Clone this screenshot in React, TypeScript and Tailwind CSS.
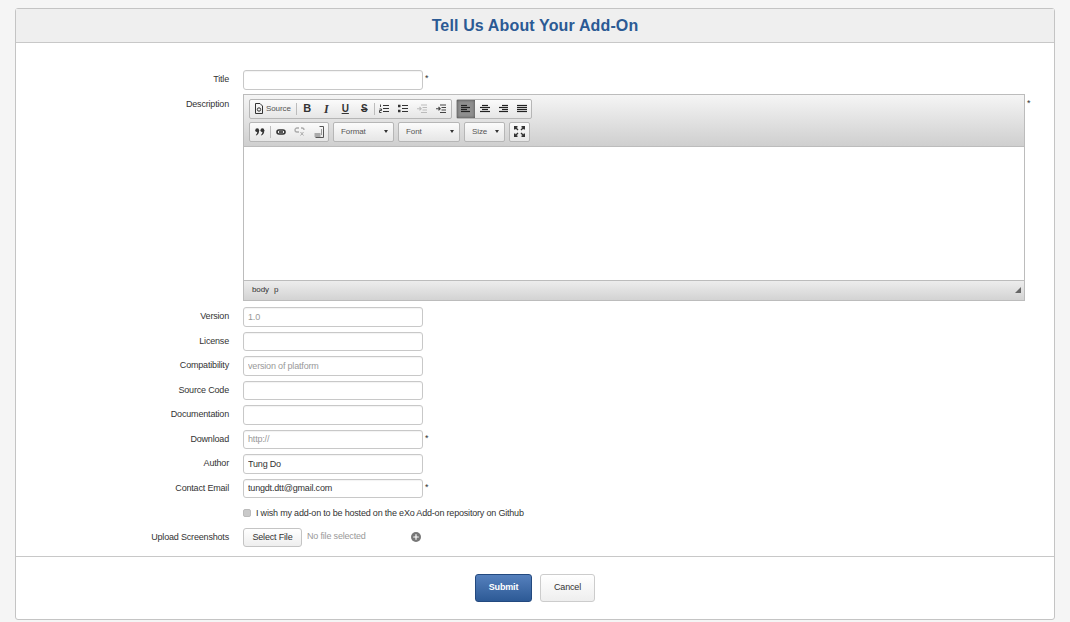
import React from 'react';
import { Plus } from 'lucide-react';

const inputClass =
  'w-[180px] h-[19.5px] rounded-[3px] border border-[#c8c8c8] bg-white px-[4px] text-[9px] tracking-[-0.18px] text-[#333] outline-none placeholder:text-[#999] shadow-[inset_0_1px_1px_rgba(0,0,0,0.05)]';

const Label = ({ children }: { children: React.ReactNode }) => (
  <label className="h-[19.5px] w-[213px] shrink-0 text-right text-[9px] leading-[19.5px] tracking-[-0.18px] text-[#333]">{children}</label>
);

const Field = ({ label, placeholder, value, required }: { label: string; placeholder?: string; value?: string; required?: boolean }) => (
  <div className="flex items-start gap-[14px]">
    <Label>{label}</Label>
    <input className={inputClass} placeholder={placeholder} defaultValue={value} />
    {required && <span className="-ml-[12px] text-[9px] leading-[16px] text-[#333]">*</span>}
  </div>
);

const Btn = ({ children, active, wide }: { children: React.ReactNode; active?: boolean; wide?: boolean }) => (
  <span className={`flex h-[18px] items-center justify-center ${wide ? 'w-[18.5px]' : 'w-[19px]'} ${active ? 'bg-[#8f8f8f] shadow-[inset_0_0_3px_rgba(0,0,0,0.5)]' : ''}`}>{children}</span>
);

const Group = ({ children }: { children: React.ReactNode }) => (
  <div className="flex h-[20px] items-center rounded-[2px] border border-[#b6b6b6] bg-gradient-to-b from-[#fbfbfb] to-[#e6e6e6]">{children}</div>
);

const Sep = ({ className }: { className: string }) => <span className={`h-[12px] w-px bg-[#bcbcbc] ${className}`} />;

const Lines = ({ rows }: { rows: [number, number][] }) => (
  <svg width="10" height="9" viewBox="0 0 10 9" fill="none" stroke="#222" strokeWidth="1.2">
    {rows.map(([a, b], i) => (
      <path key={i} d={`M${a} ${1.5 + i * 2}H${b}`} />
    ))}
  </svg>
);

const ListIcon = ({ numbered }: { numbered?: boolean }) => (
  <svg width="10" height="9" viewBox="0 0 10 9" fill="none" stroke="#333" strokeWidth="1">
    <path d="M4 1.5H10M4 4.5H10M4 7.5H10" strokeWidth="1.2" />
    {numbered ? <path d="M1.5 0.5V3M0.5 5H2.5V6.5H0.5V8.5H2.5" strokeWidth="0.9" /> : <path d="M0 2H2.5M0 7H2.5" strokeWidth="2.4" />}
  </svg>
);

const IndentIcon = ({ color }: { color: string }) => (
  <svg width="10" height="9" viewBox="0 0 10 9" fill="none" stroke={color} strokeWidth="1.1">
    <path d="M4 1H10M5.5 3.5H10M5.5 6H10M4 8.5H10" />
    <path d="M0 4.7H4M2.5 3L4.2 4.7L2.5 6.4" />
  </svg>
);

const Combo = ({ label, width }: { label: string; width: string }) => (
  <div className={`flex h-[20px] items-center justify-between rounded-[2px] border border-[#b6b6b6] bg-gradient-to-b from-[#fbfbfb] to-[#e6e6e6] pl-[7px] pr-[5px] ${width}`}>
    <span className="text-[8px] tracking-[-0.1px] text-[#555]">{label}</span>
    <span className="h-0 w-0 border-x-[2.5px] border-t-[3px] border-x-transparent border-t-[#333]" />
  </div>
);

const Editor = () => (
  <div className="-mt-[1px] mb-[1.5px] flex h-[207px] w-[782px] flex-col border border-[#bcbcbc]">
    <div className="flex h-[52px] flex-col gap-[3px] border-b border-[#bcbcbc] bg-gradient-to-b from-[#f5f5f5] to-[#cfcfcf] px-[5px] pt-[4px]">
      <div className="flex gap-[4px]">
        <Group>
          <span className="flex items-center gap-[2px] pl-[4px] pr-[3px]">
            <svg width="10" height="11" viewBox="0 0 10 11" fill="none" stroke="#333" strokeWidth="1">
              <path d="M1.5 0.5H6L8.5 3V10.5H1.5Z" />
              <circle cx="5" cy="6.5" r="1.7" />
            </svg>
            <span className="text-[8px] tracking-[-0.1px] text-[#555]">Source</span>
          </span>
          <Sep className="ml-[2px] mr-[1px]" />
          <Btn><span className="font-['Liberation_Sans'] text-[11px] font-bold leading-none text-[#333]">B</span></Btn>
          <Btn><span className="font-['Liberation_Serif'] text-[12px] font-bold italic leading-none text-[#333]">I</span></Btn>
          <Btn><span className="text-[10px] font-bold leading-none text-[#333] underline">U</span></Btn>
          <Btn><span className="text-[10px] font-bold leading-none text-[#333] line-through">S</span></Btn>
          <Sep className="" />
          <Btn><ListIcon numbered /></Btn>
          <Btn><ListIcon /></Btn>
          <Btn><IndentIcon color="#bbb" /></Btn>
          <Btn><IndentIcon color="#444" /></Btn>
        </Group>
        <Group>
          <Btn active wide><Lines rows={[[0, 6], [0, 9], [0, 6], [0, 9]]} /></Btn>
          <Btn wide><Lines rows={[[2, 8], [0, 10], [2, 8], [0, 10]]} /></Btn>
          <Btn wide><Lines rows={[[4, 10], [1, 10], [4, 10], [1, 10]]} /></Btn>
          <Btn wide><Lines rows={[[0, 10], [0, 10], [0, 10], [0, 10]]} /></Btn>
        </Group>
      </div>
      <div className="flex gap-[4px]">
        <Group>
          <Btn>
            <svg width="10" height="8" viewBox="0 0 10 8" fill="#333">
              <circle cx="2.2" cy="2.2" r="1.9" />
              <path d="M4.1 2.2C4.1 5 3 6.8 1.2 7.6L0.8 6.9C1.8 6.2 2.2 5.2 2.2 4.1Z" />
              <circle cx="7.4" cy="2.2" r="1.9" />
              <path d="M9.3 2.2C9.3 5 8.2 6.8 6.4 7.6L6 6.9C7 6.2 7.4 5.2 7.4 4.1Z" />
            </svg>
          </Btn>
          <Sep className="ml-[1px]" />
          <Btn>
            <svg width="10" height="6" viewBox="0 0 10 6" fill="none" stroke="#333" strokeWidth="1.6">
              <rect x="1" y="1" width="8" height="4" rx="2" />
              <path d="M3 3H7" />
            </svg>
          </Btn>
          <Btn>
            <svg width="11" height="9" viewBox="0 0 11 9" fill="none" stroke="#aaa" strokeWidth="1.3">
              <path d="M5 1H3A2 2 0 0 0 3 5H5M7 1H8A2 2 0 0 1 10 3" />
              <path d="M6.5 5L9.5 8.5M9.5 5L6.5 8.5" strokeWidth="1" />
            </svg>
          </Btn>
          <Btn>
            <svg width="10" height="12" viewBox="0 0 10 12" fill="none" stroke="#555" strokeWidth="1">
              <path d="M5.5 0.5H9.5V11.5H1.5" />
              <path d="M7.5 3V9" stroke="#999" />
              <path d="M0.5 7H6.5V11H0.5Z" fill="#aaa" stroke="none" />
            </svg>
          </Btn>
        </Group>
        <Combo label="Format" width="w-[61px]" />
        <Combo label="Font" width="w-[62px]" />
        <Combo label="Size" width="w-[41px]" />
        <div className="flex h-[20px] w-[21px] items-center justify-center rounded-[2px] border border-[#b6b6b6] bg-gradient-to-b from-[#fbfbfb] to-[#e6e6e6]">
          <svg width="11" height="11" viewBox="0 0 11 11" fill="none" stroke="#333" strokeWidth="1.4">
            <path d="M0.7 3.5V0.7H3.5M7.5 0.7H10.3V3.5M10.3 7.5V10.3H7.5M3.5 10.3H0.7V7.5M1 1L4 4M10 1L7 4M10 10L7 7M1 10L4 7" />
          </svg>
        </div>
      </div>
    </div>
    <div className="flex-1 bg-white" />
    <div className="flex h-[20px] items-center justify-between border-t border-[#bcbcbc] bg-gradient-to-b from-[#ededed] to-[#d3d3d3] pl-[8px] pr-[3px]">
      <span className="flex gap-[5px] text-[8px] tracking-[-0.1px] text-[#333]">
        <span>body</span>
        <span>p</span>
      </span>
      <span className="h-0 w-0 border-b-[6px] border-l-[6px] border-b-[#666] border-l-transparent" />
    </div>
  </div>
);

export default function App() {
  return (
    <div className="h-[622px] overflow-hidden bg-[#f5f5f5] pt-[8px] font-['Liberation_Sans',sans-serif]">
      <div className="mx-auto h-[612px] w-[1040px] rounded-[3px] border border-[#c4c4c4] bg-white">
        <div className="flex h-[34px] items-center justify-center border-b border-[#c8c8c8] bg-[#efefef]">
          <h1 className="text-[16px] font-bold tracking-[0.14px] text-[#2b5a94]">Tell Us About Your Add-On</h1>
        </div>
        <div className="flex flex-col gap-[5px] pt-[27px]">
          <Field label="Title" required />
          <div className="flex items-start gap-[14px]">
            <Label>Description</Label>
            <Editor />
            <span className="-ml-[12px] text-[9px] leading-[16px] text-[#333]">*</span>
          </div>
          <Field label="Version" placeholder="1.0" />
          <Field label="License" />
          <Field label="Compatibility" placeholder="version of platform" />
          <Field label="Source Code" />
          <Field label="Documentation" />
          <Field label="Download" placeholder="http://" required />
          <Field label="Author" value="Tung Do" />
          <Field label="Contact Email" value="tungdt.dtt@gmail.com" required />
          <div className="flex h-[19.5px] items-center gap-[5px] pl-[227px]">
            <span className="h-[8px] w-[8px] rounded-[2px] border border-[#bbb] bg-[#c9c9c9]" />
            <span className="translate-y-[0.5px] text-[9px] tracking-[-0.19px] text-[#333]">I wish my add-on to be hosted on the eXo Add-on repository on Github</span>
          </div>
          <div className="flex items-center gap-[14px]">
            <Label>Upload Screenshots</Label>
            <button className="h-[19.5px] w-[59px] rounded-[3px] border border-[#c4c4c4] bg-gradient-to-b from-white to-[#eee] text-[9px] tracking-[-0.18px] text-[#333]">Select File</button>
            <span className="-ml-[9px] -mt-[2px] w-[90px] text-[9px] tracking-[-0.18px] text-[#999]">No file selected</span>
            <span className="flex h-[10px] w-[10px] items-center justify-center rounded-full bg-[#777]">
              <Plus size={8} strokeWidth={3.5} color="#fff" />
            </span>
          </div>
        </div>
        <div className="mt-[9px] flex justify-center gap-[8px] border-t border-[#c8c8c8] pt-[17px]">
          <button className="h-[28px] w-[57px] rounded-[3px] border border-[#23497f] bg-gradient-to-b from-[#5580bd] to-[#2d5a96] text-[9px] font-bold tracking-[-0.15px] text-white">Submit</button>
          <button className="h-[28px] w-[55px] rounded-[3px] border border-[#cccccc] bg-gradient-to-b from-white to-[#eeeeee] text-[9px] tracking-[-0.18px] text-[#333]">Cancel</button>
        </div>
      </div>
    </div>
  );
}
